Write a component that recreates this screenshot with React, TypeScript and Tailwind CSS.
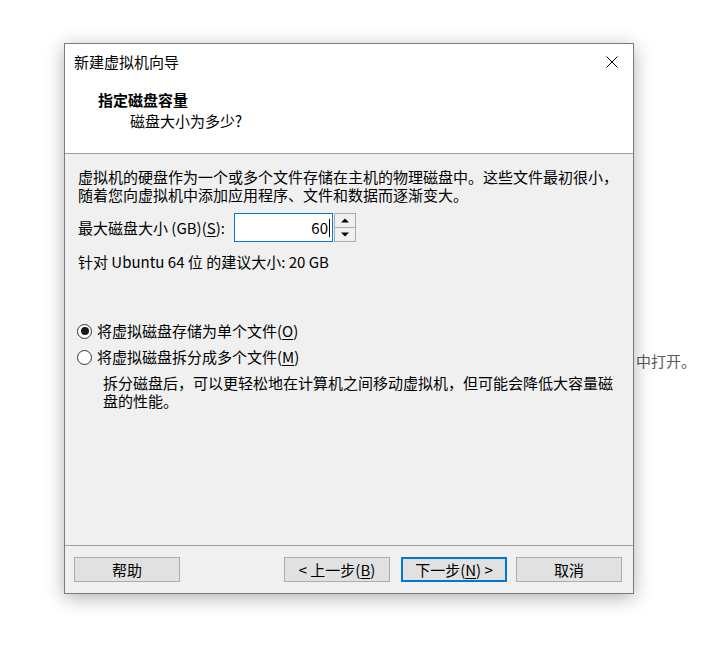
import React from "react";

const FONT = { fontFamily: '"Noto Sans CJK SC", "Microsoft YaHei", sans-serif' };

function Btn({ children, primary }: { children: React.ReactNode; primary?: boolean }) {
  return (
    <div
      className={
        "w-[106px] h-[25px] flex items-center justify-center bg-[#e1e1e1] text-[15px] leading-none text-black " +
        (primary ? "border-2 border-[#0078d7]" : "border border-[#adadad]")
      }
    >
      {children}
    </div>
  );
}

function Radio({ checked }: { checked?: boolean }) {
  return (
    <div className="w-[15px] h-[15px] rounded-full border border-[#333] bg-white flex items-center justify-center shrink-0">
      {checked && <div className="w-[8px] h-[8px] rounded-full bg-[#1a1a1a]" />}
    </div>
  );
}

export default function App() {
  return (
    <div className="relative w-[709px] h-[650px] bg-white overflow-hidden text-black" style={FONT}>
      <div className="absolute left-[636px] top-[350px] text-[15px] leading-[22px] text-[#5a5a5a]">中打开。</div>

      <div className="absolute left-[64px] top-[43px] w-[570px] h-[551px] border border-[#7a7a7a] bg-[#f0f0f0] flex flex-col shadow-[0_4px_18px_rgba(0,0,0,0.3)]">
        {/* header */}
        <div className="h-[110px] bg-white border-b border-[#a0a0a0] flex flex-col shrink-0">
          <div className="h-[36px] flex items-center justify-between pl-[9px] pr-[15px]">
            <span className="text-[15px] leading-[20px]">新建虚拟机向导</span>
            <svg width="12" height="12" viewBox="0 0 12 12">
              <path d="M0.5 0.5 L11.5 11.5 M11.5 0.5 L0.5 11.5" stroke="#000" strokeWidth="1" />
            </svg>
          </div>
          <div className="mt-[10px] pl-[33px] text-[15px] leading-[20px] font-bold">指定磁盘容量</div>
          <div className="mt-[1px] pl-[65px] text-[15px] leading-[20px]">磁盘大小为多少?</div>
        </div>

        {/* body */}
        <div className="flex-1 pt-[14px] px-[13px] text-[15px]">
          <p className="leading-[18px]">
            虚拟机的硬盘作为一个或多个文件存储在主机的物理磁盘中。这些文件最初很小，
            <br />
            随着您向虚拟机中添加应用程序、文件和数据而逐渐变大。
          </p>
          <div className="mt-[9px] flex items-center h-[29px]">
            <div className="w-[156px] whitespace-nowrap leading-[18px]">
              最大磁盘大小 (GB)(<span className="underline underline-offset-2">S</span>):
            </div>
            <div className="w-[99px] h-[29px] bg-white border border-[#0078d7] flex items-center justify-end pr-[2px]">
              <span className="leading-[18px]">60</span>
              <span className="w-[1px] h-[18px] bg-black ml-[1px]" />
            </div>
            <div className="w-[22px] h-[29px] flex flex-col ml-[1px]">
              <div className="h-[15px] border border-[#adadad] bg-[#f0f0f0] flex items-center justify-center">
                <svg width="8" height="5" viewBox="0 0 8 5"><path d="M0 4.5 L4 0.5 L8 4.5 Z" fill="#000" /></svg>
              </div>
              <div className="h-[14px] border border-t-0 border-[#adadad] bg-[#f0f0f0] flex items-center justify-center">
                <svg width="8" height="5" viewBox="0 0 8 5"><path d="M0 0.5 L4 4.5 L8 0.5 Z" fill="#000" /></svg>
              </div>
            </div>
          </div>
          <div className="mt-[11px] leading-[18px]">针对 Ubuntu 64 位 的建议大小: 20 GB</div>

          <div className="mt-[47px] h-[26px] flex items-center gap-[5px] -ml-[1px]">
            <Radio checked />
            <span className="leading-[18px]">
              将虚拟磁盘存储为单个文件(<span className="underline underline-offset-2">O</span>)
            </span>
          </div>
          <div className="h-[26px] flex items-center gap-[5px] -ml-[1px]">
            <Radio />
            <span className="leading-[18px]">
              将虚拟磁盘拆分成多个文件(<span className="underline underline-offset-2">M</span>)
            </span>
          </div>
          <p className="mt-[4px] pl-[25px] leading-[18px]">
            拆分磁盘后，可以更轻松地在计算机之间移动虚拟机，但可能会降低大容量磁
            <br />
            盘的性能。
          </p>
        </div>

        {/* footer */}
        <div className="h-[48px] border-t border-[#a0a0a0] pt-[11px] pl-[9px] pr-[11px] flex justify-between items-start shrink-0">
          <Btn>帮助</Btn>
          <div className="flex">
            <Btn>
              &lt; 上一步(<span className="underline underline-offset-2">B</span>)
            </Btn>
            <div className="ml-[11px]">
              <Btn primary>
                下一步(<span className="underline underline-offset-2">N</span>) &gt;
              </Btn>
            </div>
            <div className="ml-[9px]">
              <Btn>取消</Btn>
            </div>
          </div>
        </div>
      </div>
    </div>
  );
}
